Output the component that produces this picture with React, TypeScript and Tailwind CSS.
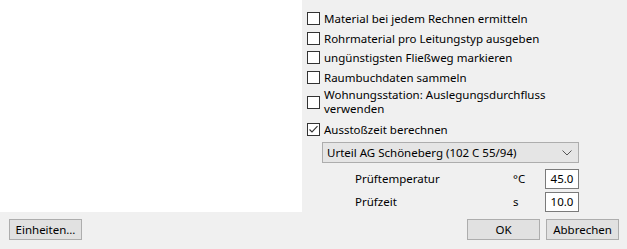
import { ReactNode } from "react";

function Box({ checked = false }: { checked?: boolean }) {
  return (
    <span className="flex h-[13px] w-[13px] shrink-0 items-center justify-center border border-[#333333] bg-white">
      {checked && (
        <svg width="11" height="11" viewBox="0 0 11 11" fill="none">
          <path d="M1.5 5.5 L4 8 L9.5 2.2" stroke="#333333" strokeWidth="1.1" />
        </svg>
      )}
    </span>
  );
}

function CheckRow({
  children,
  checked,
  className,
}: {
  children: ReactNode;
  checked?: boolean;
  className: string;
}) {
  return (
    <div className={`flex items-center gap-[4px] ${className}`}>
      <Box checked={checked} />
      <span className="leading-[13px]">{children}</span>
    </div>
  );
}

function Button({ label, className }: { label: string; className?: string }) {
  return (
    <button
      type="button"
      className={`flex h-[21px] w-[73px] items-center justify-center border border-[#adadad] bg-[#e1e1e1] text-[11.5px] text-black ${className ?? ""}`}
    >
      {label}
    </button>
  );
}

export default function App() {
  return (
    <div
      className="flex h-[249px] w-[627px] flex-col bg-[#f0f0f0] text-[11.5px] text-black"
      style={{ fontFamily: '"Noto Sans", "Liberation Sans", sans-serif' }}
    >
      <div className="flex h-[212px]">
        <div className="h-[212px] w-[302px] bg-white" />

        <div className="flex flex-col pl-[5px]">
          <CheckRow className="mt-[11px] h-[14px]">Material bei jedem Rechnen ermitteln</CheckRow>
          <CheckRow className="mt-[6px] h-[14px]">Rohrmaterial pro Leitungstyp ausgeben</CheckRow>
          <CheckRow className="mt-[5px] h-[14px]">ungünstigsten Fließweg markieren</CheckRow>
          <CheckRow className="mt-[6px] h-[14px]">Raumbuchdaten sammeln</CheckRow>
          <div className="mt-[4px] flex h-[28px] items-center gap-[4px]">
            <Box />
            <div className="flex flex-col">
              <span className="block h-[14px] leading-[14px]">Wohnungsstation: Auslegungsdurchfluss</span>
              <span className="block h-[14px] leading-[14px]">verwenden</span>
            </div>
          </div>
          <CheckRow checked className="mt-[6px] h-[14px]">Ausstoßzeit berechnen</CheckRow>

          <div className="ml-[15px] mt-[6px] flex h-[21px] w-[257px] items-center justify-between border border-[#adadad] bg-[#e5e5e5] pl-[4px] pr-[6px]">
            <span>Urteil AG Schöneberg (102 C 55/94)</span>
            <svg width="10" height="6" viewBox="0 0 10 6" fill="none">
              <path d="M0.5 0.5 L5 5 L9.5 0.5" stroke="#555555" strokeWidth="1" />
            </svg>
          </div>

          <div className="mt-[6px] flex h-[20px] items-center">
            <span className="ml-[48px] w-[158px]">Prüftemperatur</span>
            <span className="w-[32px]">°C</span>
            <span className="flex h-[20px] w-[34px] items-center justify-center border border-[#7a7a7a] bg-white">
              45.0
            </span>
          </div>
          <div className="mt-[3px] flex h-[20px] items-center">
            <span className="ml-[48px] w-[158px]">Prüfzeit</span>
            <span className="w-[32px]">s</span>
            <span className="flex h-[20px] w-[34px] items-center justify-center border border-[#7a7a7a] bg-white">
              10.0
            </span>
          </div>
        </div>
      </div>

      <div className="mt-[7px] flex items-center px-[8px]">
        <Button label="Einheiten…" className="ml-[1px]" />
        <div className="flex-1" />
        <Button label="OK" />
        <Button label="Abbrechen" className="ml-[6px]" />
      </div>
    </div>
  );
}
